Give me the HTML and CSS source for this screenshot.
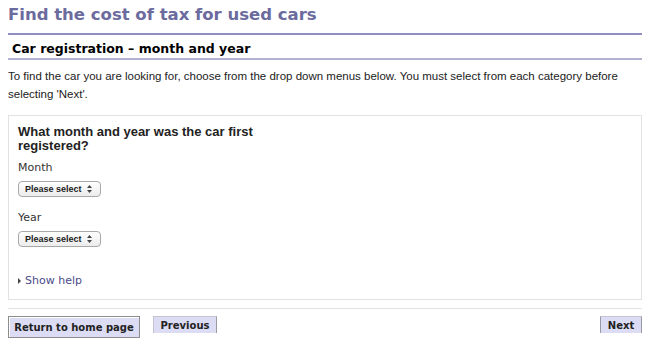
FILE: index.html
```html
<!DOCTYPE html>
<html lang="en">
<head>
  <meta charset="UTF-8" />
  <title>Find the cost of tax for used cars</title>
  <link rel="stylesheet" href="styles.css">
</head>
<body>

  <h1 class="page-title">Find the cost of tax for used cars</h1>

  <h2 class="section-title">Car registration &ndash; month and year</h2>

  <p class="intro">To find the car you are looking for, choose from the drop down menus below. You must select from each category before selecting 'Next'.</p>

  <form class="question-box">
    <h3>What month and year was the car first registered?</h3>

    <label for="month">Month</label>
    <div class="select-wrap">
      <select id="month">
        <option>Please select</option>
      </select>
      <svg class="arrows" width="5" height="8" viewBox="0 0 5 8"><path d="M2.5 0 L5 3 L0 3 Z M0 5 L5 5 L2.5 8 Z" fill="#444"/></svg>
    </div>

    <label for="year">Year</label>
    <div class="select-wrap">
      <select id="year">
        <option>Please select</option>
      </select>
      <svg class="arrows" width="5" height="8" viewBox="0 0 5 8"><path d="M2.5 0 L5 3 L0 3 Z M0 5 L5 5 L2.5 8 Z" fill="#444"/></svg>
    </div>

    <a href="#" class="show-help"><span class="tri"></span>Show help</a>
  </form>

  <div class="nav-buttons">
    <button type="button" class="btn btn-home">Return to home page</button>
    <button type="button" class="btn btn-prev">Previous</button>
    <button type="button" class="btn btn-next">Next</button>
  </div>

</body>
</html>
```

FILE: styles.css
```css
* {
  box-sizing: border-box;
  margin: 0;
  padding: 0;
}

body {
  font-family: 'Liberation Sans', Arial, sans-serif;
  font-size: 11.5px;
  color: #222;
  background: #fff;
  padding: 0 8px;
}

.page-title {
  font-family: 'DejaVu Sans', Verdana, sans-serif;
  font-size: 16.5px;
  font-weight: bold;
  color: #6b6b9e;
  padding-top: 5px;
  height: 35px;
  border-bottom: 2px solid #8f8fc0;
}

.section-title {
  font-family: 'DejaVu Sans', Verdana, sans-serif;
  font-size: 12.5px;
  font-weight: bold;
  color: #000;
  padding: 6px 4px 0;
  height: 25px;
  border-bottom: 2px solid #b1b1d1;
}

.intro {
  line-height: 18px;
  margin-top: 7px;
  color: #222;
}

.question-box {
  margin-top: 12px;
  border: 1px solid #e2e2e2;
  padding: 9px 9px 0;
  height: 185px;
}

.question-box h3 {
  font-family: 'Liberation Sans', Arial, sans-serif;
  font-size: 13px;
  font-weight: bold;
  color: #222;
  line-height: 14px;
  max-width: 250px;
}

.question-box label {
  display: block;
  font-family: 'DejaVu Sans', Verdana, sans-serif;
  font-size: 11px;
  line-height: 13px;
  color: #333;
  margin-top: 8px;
}

.select-wrap {
  position: relative;
  width: 83px;
  height: 16px;
  margin-top: 7px;
  margin-bottom: 14px;
}

.select-wrap select {
  appearance: none;
  -webkit-appearance: none;
  width: 83px;
  height: 16px;
  border: 1px solid #a8a8a8;
  border-radius: 4px;
  background: linear-gradient(#fff, #ececec);
  font-family: 'Liberation Sans', Arial, sans-serif;
  font-size: 9px;
  font-weight: bold;
  color: #222;
  padding: 0 0 0 6px;
}

.select-wrap .arrows {
  position: absolute;
  right: 9px;
  top: 4px;
  pointer-events: none;
}

.show-help {
  display: inline-flex;
  align-items: center;
  gap: 4px;
  margin-top: 13px;
  font-family: 'DejaVu Sans', Verdana, sans-serif;
  font-size: 11px;
  color: #4b4b8a;
  text-decoration: none;
}

.show-help .tri {
  width: 0;
  height: 0;
  border-left: 3px solid #444;
  border-top: 3px solid transparent;
  border-bottom: 3px solid transparent;
}

.nav-buttons {
  display: flex;
  align-items: flex-start;
  gap: 13px;
  margin-top: 8px;
  padding-top: 7px;
  border-top: 1px solid #e2e2e2;
}

.btn {
  font-family: 'DejaVu Sans', Verdana, sans-serif;
  font-size: 10px;
  font-weight: bold;
  color: #222;
  background: #dcdcf4;
  cursor: pointer;
}

.btn-home {
  height: 22px;
  width: 132px;
  border: 1px solid #8d8d8d;
  box-shadow: inset 1px 1px 0 #fff;
}

.btn-prev,
.btn-next {
  height: 17px;
  padding: 0 6px;
  border: 1px solid #c4c4d0;
  border-right-color: #9a9aa4;
  border-bottom: none;
}

.btn-prev {
  width: 64px;
}

.btn-next {
  width: 42px;
  margin-left: auto;
  border-left-color: #9a9aa4;
}
```
